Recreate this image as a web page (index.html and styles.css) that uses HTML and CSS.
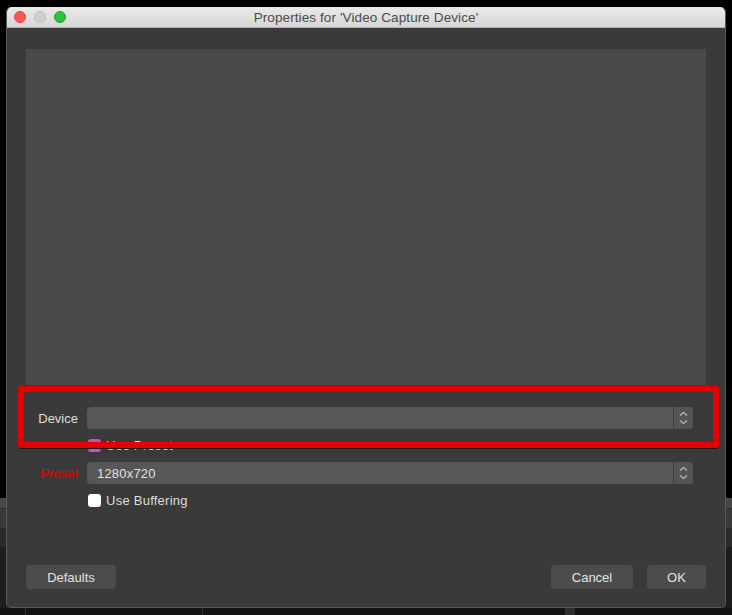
FILE: index.html
```html
<!DOCTYPE html>
<html>
<head>
<meta charset="utf-8">
<link rel="stylesheet" href="styles.css">
</head>
<body>
<div class="desktop">
  <div class="backdrop">
    <div class="band b1"></div>
    <div class="band b2"></div>
    <div class="band b3"></div>
    <div class="band b4"></div>
    <div class="band b5">
      <span class="vline l1"></span>
      <span class="vline l2"></span>
      <span class="vblock"></span>
    </div>
  </div>

  <div class="window">
    <div class="titlebar">
      <div class="lights">
        <span class="light red"></span>
        <span class="light gray"></span>
        <span class="light green"></span>
      </div>
      <div class="title">Properties for 'Video Capture Device'</div>
    </div>

    <div class="body">
      <div class="preview"></div>

      <div class="form">
        <div class="row">
          <label class="label">Device</label>
          <div class="combo">
            <span class="value"></span>
            <span class="arrows">
              <svg width="9" height="14" viewBox="0 0 9 14"><path d="M1 4.5 L4.5 1.5 L8 4.5" fill="none" stroke="#bdbdbd" stroke-width="1.1"/><path d="M1 9.5 L4.5 12.5 L8 9.5" fill="none" stroke="#bdbdbd" stroke-width="1.1"/></svg>
            </span>
          </div>
        </div>
        <div class="row">
          <span class="label"></span>
          <div class="check">
            <span class="box on">
              <svg width="13" height="13" viewBox="0 0 13 13"><path d="M3 6.8 L5.4 9.2 L10 3.8" fill="none" stroke="#fff" stroke-width="1.6"/></svg>
            </span>
            <span class="check-text">Use Preset</span>
          </div>
        </div>
        <div class="row">
          <label class="label warn">Preset</label>
          <div class="combo">
            <span class="value">1280x720</span>
            <span class="arrows">
              <svg width="9" height="14" viewBox="0 0 9 14"><path d="M1 4.5 L4.5 1.5 L8 4.5" fill="none" stroke="#bdbdbd" stroke-width="1.1"/><path d="M1 9.5 L4.5 12.5 L8 9.5" fill="none" stroke="#bdbdbd" stroke-width="1.1"/></svg>
            </span>
          </div>
        </div>
        <div class="row">
          <span class="label"></span>
          <div class="check">
            <span class="box"></span>
            <span class="check-text">Use Buffering</span>
          </div>
        </div>
      </div>

      <div class="buttons">
        <button class="btn defaults">Defaults</button>
        <div class="right">
          <button class="btn cancel">Cancel</button>
          <button class="btn ok">OK</button>
        </div>
      </div>
    </div>

    <div class="highlight"></div>
  </div>
</div>
</body>
</html>
```

FILE: styles.css
```css
* { box-sizing: border-box; }
html, body {
  margin: 0;
  padding: 0;
  width: 732px;
  height: 615px;
  overflow: hidden;
  background: #000;
  font-family: "Liberation Sans", Arial, sans-serif;
}
.desktop {
  position: relative;
  width: 732px;
  height: 615px;
  background: #000;
}
.backdrop {
  position: absolute;
  left: 0;
  top: 498px;
  width: 732px;
  height: 117px;
  display: flex;
  flex-direction: column;
}
.band { width: 100%; }
.b1 { height: 11px; background: #474747; border-bottom: 1px solid #2c2c2c; }
.b2 { height: 19px; background: #3a3a3a; }
.b3 { height: 19px; background: #2a2a2a; }
.b4 { height: 61px; background: #1d1d1d; }
.b5 { flex: 1; background: #141414; position: relative; }
.vline { position: absolute; top: 0; bottom: 0; width: 1px; background: #333; }
.l1 { left: 25px; }
.l2 { left: 202px; }
.vblock { position: absolute; top: 0; bottom: 0; left: 565px; width: 10px; background: #2e2e2e; }

.window {
  position: absolute;
  left: 6px;
  top: 7px;
  width: 720px;
  height: 601px;
  border-radius: 5px;
  overflow: hidden;
  background: #3a3a3a;
  border: 1px solid #5a5a5a;
  border-top: none;
  display: flex;
  flex-direction: column;
}
.titlebar {
  height: 21px;
  flex: none;
  position: relative;
  background: linear-gradient(#ebebeb, #d5d5d5);
  border-bottom: 1px solid #b3b3b3;
  border-radius: 5px 5px 0 0;
  display: flex;
  align-items: center;
  justify-content: center;
}
.lights {
  position: absolute;
  left: 7px;
  top: 4px;
  display: flex;
  gap: 8px;
}
.light {
  width: 12px;
  height: 12px;
  border-radius: 50%;
  display: block;
}
.red { background: #fd5753; border: 1px solid #e0443e; }
.gray { background: #d0d0d0; border: 1px solid #bdbdbd; }
.green { background: #29c33e; border: 1px solid #1aab29; }
.title {
  font-size: 13.5px;
  color: #4a4a4a;
  letter-spacing: 0.1px;
}

.body {
  flex: 1;
  display: flex;
  flex-direction: column;
  padding: 21px 19px 18px 19px;
}
.preview {
  height: 336px;
  background: #4a4a4a;
  flex: none;
}
.form {
  margin: 22px 13px 0 -19px;
  display: flex;
  flex-direction: column;
  gap: 5.5px;
}
.row {
  display: grid;
  grid-template-columns: 71px 1fr;
  column-gap: 9px;
  height: 22px;
  align-items: center;
}
.label {
  text-align: right;
  font-size: 13px;
  color: #dedede;
}
.label.warn { color: #e60000; }
.combo {
  height: 22px;
  background: #575757;
  border-radius: 4px;
  display: flex;
  align-items: center;
  overflow: hidden;
}
.value {
  flex: 1;
  padding-left: 10px;
  font-size: 13px;
  color: #e2e2e2;
  letter-spacing: 0.2px;
}
.arrows {
  width: 20px;
  height: 22px;
  border-left: 1px solid #3e3e3e;
  background: #545454;
  display: flex;
  align-items: center;
  justify-content: center;
}
.arrows svg { display: block; }
.check {
  display: flex;
  align-items: center;
  gap: 5px;
  margin-left: 1px;
}
.box {
  width: 13px;
  height: 13px;
  border-radius: 3px;
  background: #fff;
  display: block;
}
.box.on { background: #bd55bc; }
.box svg { display: block; }
.check-text {
  font-size: 13px;
  color: #dedede;
  letter-spacing: 0.25px;
}

.buttons {
  margin-top: auto;
  display: flex;
  justify-content: space-between;
  align-items: center;
}
.right { display: flex; gap: 14px; }
.btn {
  height: 24px;
  border: none;
  border-radius: 4px;
  background: #4c4c4c;
  color: #e2e2e2;
  font-family: "Liberation Sans", Arial, sans-serif;
  font-size: 13px;
  padding: 0;
}
.defaults { width: 90px; }
.cancel { width: 82px; }
.ok { width: 59px; }

.highlight {
  position: absolute;
  left: 11px;
  top: 379px;
  width: 701px;
  height: 62px;
  border: 6px solid #e40000;
  border-radius: 3px;
  box-shadow: 0 1px 0 #1a1a1a;
  pointer-events: none;
}
```
